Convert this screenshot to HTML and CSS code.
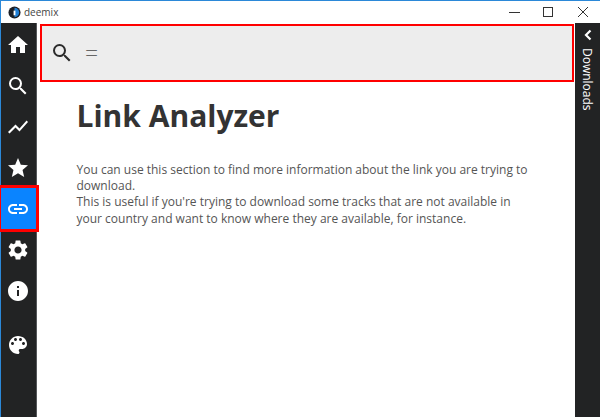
FILE: index.html
```html
<!DOCTYPE html>
<html lang="en">
<head>
    <meta charset="UTF-8">
    <meta name="viewport" content="width=device-width, initial-scale=1.0">
    <title>deemix</title>
    <link rel="stylesheet" href="styles.css">
</head>
<body>

    <div class="window">
        <!-- Title bar -->
        <header class="titlebar">
            <svg class="app-logo" viewBox="0 0 14 14">
                <circle cx="7" cy="7" r="6.5" fill="#1c1f26"/>
                <path d="M7 2a5 5 0 0 1 0 10z" fill="#1f7fd6"/>
                <rect x="6" y="5" width="2" height="5" fill="#fff"/>
            </svg>
            <span class="app-name">deemix</span>
            <div class="window-controls">
                <svg class="control" viewBox="0 0 34 22"><path d="M11 11.5h11" stroke="#333" fill="none"/></svg>
                <svg class="control" viewBox="0 0 34 22"><rect x="11.5" y="6.5" width="9" height="9" stroke="#333" fill="none"/></svg>
                <svg class="control" viewBox="0 0 34 22"><path d="M12 6l10 10M22 6L12 16" stroke="#333" fill="none"/></svg>
            </div>
        </header>

        <div class="app">
            <!-- Sidebar -->
            <nav class="sidebar">
                <a class="nav-item"><svg class="icon" viewBox="0 0 24 24"><path d="M10 20v-6h4v6h5v-8h3L12 3 2 12h3v8z"/></svg></a>
                <a class="nav-item"><svg class="icon" viewBox="0 0 24 24"><path d="M15.5 14h-.79l-.28-.27A6.471 6.471 0 0 0 16 9.5 6.5 6.5 0 1 0 9.5 16c1.61 0 3.09-.59 4.23-1.57l.27.28v.79l5 4.99L20.49 19l-4.99-5zm-6 0C7.01 14 5 11.99 5 9.5S7.01 5 9.5 5 14 7.01 14 9.5 11.99 14 9.5 14z"/></svg></a>
                <a class="nav-item"><svg class="icon" viewBox="0 0 24 24"><path d="M3.5 18.49l6-6.01 4 4L22 6.92l-1.41-1.41-7.09 7.97-4-4L2 16.99z"/></svg></a>
                <a class="nav-item"><svg class="icon" viewBox="0 0 24 24"><path d="M12 17.27L18.18 21l-1.64-7.03L22 9.24l-7.19-.61L12 2 9.19 8.63 2 9.24l5.46 4.73L5.82 21z"/></svg></a>
                <a class="nav-item active"><svg class="icon" viewBox="0 0 24 24"><path d="M3.9 12c0-1.71 1.39-3.1 3.1-3.1h4V7H7c-2.76 0-5 2.24-5 5s2.24 5 5 5h4v-1.9H7c-1.71 0-3.1-1.39-3.1-3.1zM8 13h8v-2H8v2zm9-6h-4v1.9h4c1.71 0 3.1 1.39 3.1 3.1s-1.39 3.1-3.1 3.1h-4V17h4c2.76 0 5-2.24 5-5s-2.24-5-5-5z"/></svg></a>
                <a class="nav-item"><svg class="icon" viewBox="0 0 24 24"><path d="M19.14 12.94c.04-.3.06-.61.06-.94 0-.32-.02-.64-.07-.94l2.03-1.58a.49.49 0 0 0 .12-.61l-1.92-3.32a.488.488 0 0 0-.59-.22l-2.39.96c-.5-.38-1.03-.7-1.62-.94l-.36-2.54a.484.484 0 0 0-.48-.41h-3.84c-.24 0-.43.17-.47.41l-.36 2.54c-.59.24-1.13.57-1.62.94l-2.39-.96c-.22-.08-.47 0-.59.22L2.74 8.87c-.12.21-.08.47.12.61l2.03 1.58c-.05.3-.09.63-.09.94s.02.64.07.94l-2.03 1.58a.49.49 0 0 0-.12.61l1.92 3.32c.12.22.37.29.59.22l2.39-.96c.5.38 1.03.7 1.62.94l.36 2.54c.05.24.24.41.48.41h3.84c.24 0 .44-.17.47-.41l.36-2.54c.59-.24 1.13-.56 1.62-.94l2.39.96c.22.08.47 0 .59-.22l1.92-3.32c.12-.22.07-.47-.12-.61l-2.01-1.58zM12 15.6c-1.98 0-3.6-1.62-3.6-3.6s1.62-3.6 3.6-3.6 3.6 1.62 3.6 3.6-1.62 3.6-3.6 3.6z"/></svg></a>
                <a class="nav-item"><svg class="icon" viewBox="0 0 24 24"><path d="M12 2C6.48 2 2 6.48 2 12s4.48 10 10 10 10-4.48 10-10S17.52 2 12 2zm1 15h-2v-6h2v6zm0-8h-2V7h2v2z"/></svg></a>
                <a class="nav-item theme"><svg class="icon" viewBox="0 0 24 24"><path d="M12 3c-4.97 0-9 4.03-9 9s4.03 9 9 9c.83 0 1.5-.67 1.5-1.5 0-.39-.15-.74-.39-1.01-.23-.26-.38-.61-.38-.99 0-.83.67-1.5 1.5-1.5H16c2.76 0 5-2.24 5-5 0-4.42-4.03-8-9-8zm-5.5 9c-.83 0-1.5-.67-1.5-1.5S5.67 9 6.5 9 8 9.67 8 10.5 7.33 12 6.5 12zm3-4C8.67 8 8 7.33 8 6.5S8.67 5 9.5 5s1.5.67 1.5 1.5S10.33 8 9.5 8zm5 0c-.83 0-1.5-.67-1.5-1.5S13.67 5 14.5 5s1.5.67 1.5 1.5S15.33 8 14.5 8zm3 4c-.83 0-1.5-.67-1.5-1.5S16.67 9 17.5 9s1.5.67 1.5 1.5-.67 1.5-1.5 1.5z"/></svg></a>
            </nav>

            <!-- Main content -->
            <main class="content">
                <div class="searchbar">
                    <svg class="search-icon" viewBox="0 0 24 24"><path d="M15.5 14h-.79l-.28-.27A6.471 6.471 0 0 0 16 9.5 6.5 6.5 0 1 0 9.5 16c1.61 0 3.09-.59 4.23-1.57l.27.28v.79l5 4.99L20.49 19l-4.99-5zm-6 0C7.01 14 5 11.99 5 9.5S7.01 5 9.5 5 14 7.01 14 9.5 11.99 14 9.5 14z"/></svg>
                    <span class="search-text">=</span>
                </div>
                <section class="page">
                    <h1>Link Analyzer</h1>
                    <p>You can use this section to find more information about the link you are trying to download.<br>This is useful if you're trying to download some tracks that are not available in your country and want to know where they are available, for instance.</p>
                </section>
            </main>

            <!-- Downloads panel -->
            <aside class="downloads">
                <svg class="chevron" viewBox="0 0 10 12"><path d="M7.5 1.5L3 6l4.5 4.5" fill="none" stroke="#fff" stroke-width="2.2"/></svg>
                <span class="downloads-label">Downloads</span>
            </aside>
        </div>
    </div>

</body>
</html>
```

FILE: styles.css
```css
* {
    box-sizing: border-box;
}

body {
    margin: 0;
    padding: 0;
    font-family: "Open Sans", "Noto Sans", sans-serif;
    background-color: #fff;
    overflow: hidden;
}

.window {
    display: flex;
    flex-direction: column;
    width: 600px;
    height: 417px;
    border-top: 1px solid #2b88d8;
    border-left: 1px solid #2b88d8;
}

.titlebar {
    display: flex;
    align-items: center;
    flex: 0 0 22px;
    padding-left: 7px;
}

.app-logo {
    width: 13px;
    height: 13px;
}

.app-name {
    margin-left: 3px;
    font-size: 10px;
    color: #444;
}

.window-controls {
    display: flex;
    margin-left: auto;
}

.control {
    width: 34px;
    height: 22px;
}

.app {
    display: flex;
    flex: 1;
    min-height: 0;
}

.sidebar {
    display: flex;
    flex-direction: column;
    flex: 0 0 36px;
    padding: 1px 1px 0 0;
    background-color: #222324;
    border-right: 1px solid #55575a;
}

.nav-item {
    display: flex;
    align-items: center;
    justify-content: center;
    height: 41px;
}

.nav-item.active {
    background-color: #0a84ff;
    outline: 3px solid #f00;
    outline-offset: 0;
    position: relative;
    margin-right: -1px;
    padding-right: 1px;
}

.nav-item.theme {
    margin-top: 13px;
}

.icon {
    width: 24px;
    height: 24px;
    fill: #fff;
}

.content {
    flex: 1;
    min-width: 0;
    padding: 1px 1px 0 3px;
}

.searchbar {
    display: flex;
    align-items: center;
    height: 58px;
    padding-left: 8px;
    background-color: #ededed;
    border: 2px solid #f00;
}

.search-icon {
    width: 24px;
    height: 24px;
    fill: #2b2b2b;
}

.search-text {
    margin-left: 11px;
    font-size: 23px;
    font-weight: 300;
    color: #666;
}

.page {
    padding: 0 40px 0 36.5px;
}

h1 {
    margin: 13px 0 0;
    font-size: 30px;
    line-height: 42px;
    font-weight: 700;
    color: #333;
}

p {
    margin: 25px 0 0;
    font-size: 12px;
    line-height: 16.2px;
    color: #555;
}

.downloads {
    display: flex;
    flex-direction: column;
    align-items: center;
    flex: 0 0 25px;
    padding-top: 6px;
    background-color: #222324;
}

.chevron {
    width: 10px;
    height: 12px;
}

.downloads-label {
    margin-top: 7px;
    writing-mode: vertical-rl;
    font-size: 12px;
    color: #fff;
}
```
